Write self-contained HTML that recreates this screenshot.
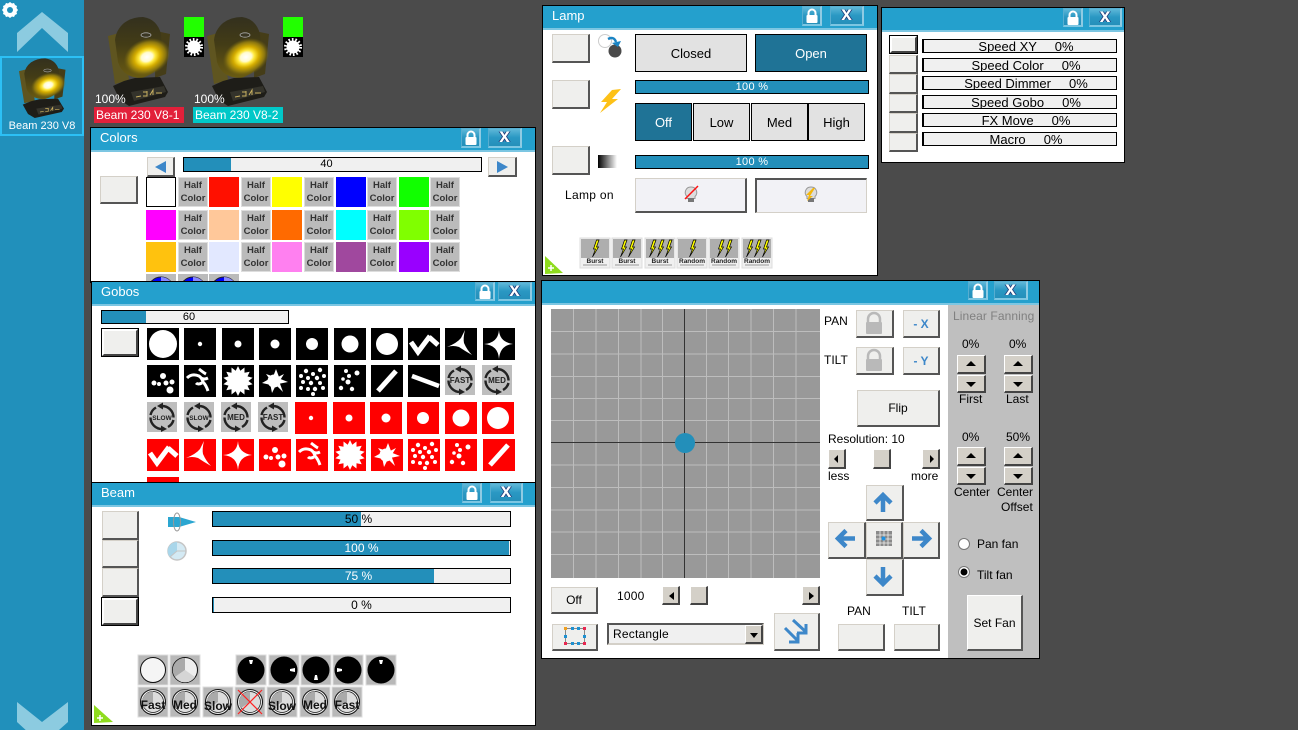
<!DOCTYPE html>
<html><head><meta charset="utf-8"><title>Fixture</title>
<style>
html,body{margin:0;padding:0;width:1298px;height:730px;overflow:hidden;background:#4b4b4b;font-family:"Liberation Sans",sans-serif;font-size:12px;color:#000}
.a,.w,.b,.t,.bar,.sp,.sb,.hc,.sw,.tb{position:absolute;box-sizing:border-box}
.w{background:#fff;border:1px solid #000;overflow:hidden}
.in{position:absolute;width:1298px;height:730px}
.tb{background:#24a0cd;border-bottom:2px solid #7cc6e2}
.t{white-space:nowrap;line-height:14px}
.ttl{color:#fff;font-size:13px;line-height:16px}
.b{background:#efefed;border:1px solid;border-color:#d4d0c8 #555 #555 #d4d0c8;border-width:1px 2px 2px 1px;text-align:center;display:flex;align-items:center;justify-content:center}
.sel{outline:1px solid #000;border-color:#fff #444 #444 #fff;border-width:2px}
.bar{background:#f0f0f0;border:1px solid #000;text-align:center;color:#000;font-size:12px;overflow:hidden}
.bar i{position:absolute;left:0;top:0;bottom:0;background:#238fba}
.bar span{position:relative;display:block;white-space:nowrap}
.sp{background:#d4d0c8;border:1px solid;border-color:#fff #444 #444 #fff;border-width:1px 2px 2px 1px}
.hc{background:#bbb;border:1px solid #ddd;font-weight:bold;font-size:9.5px;line-height:12.5px;color:#333;text-align:center;padding-top:2px;width:30px;height:30px}
.sw{width:30px;height:30px}
.st{background:#e2e2e2;border:1px solid #000;display:flex;align-items:center;justify-content:center;font-size:13px;position:absolute;box-sizing:border-box}
.on{background:#1f7396;color:#fff}
.lk,.xb{position:absolute;box-sizing:border-box;background:linear-gradient(#5fb8d8,#2a98c3 50%,#2590ba);border:1px solid #57add0;border-right:2px solid #8fcbe3;border-bottom:2px solid #7cc6e2}
.xb{color:#fff;font-weight:bold;font-size:19px;text-align:center;line-height:15px;text-shadow:1px 0 0 #223a7a,-1px 0 0 #223a7a}
svg{position:absolute;left:0;top:0;overflow:visible}
.s13 span{padding-left:12px;box-sizing:border-box}
</style></head><body>

<svg width="1298" height="730" viewBox="0 0 1298 730" style="z-index:0">
<defs>
<radialGradient id="glow" cx=".5" cy=".5" r=".5"><stop offset="0" stop-color="#ffffff"/><stop offset=".24" stop-color="#fffbd0"/><stop offset=".36" stop-color="#ffe83c"/><stop offset=".55" stop-color="#d4ac00"/><stop offset=".8" stop-color="#8a7510"/><stop offset="1" stop-color="#6a5c10" stop-opacity="0"/></radialGradient>
<linearGradient id="hd" x1="0" y1="0" x2="0" y2="1"><stop offset="0" stop-color="#33301e"/><stop offset=".45" stop-color="#433c16"/><stop offset="1" stop-color="#6a5b12"/></linearGradient>
<g id="light">
<polygon points="108,36 123,32 129,80 115,84" fill="#5f5520"/>
<polygon points="156,31 170,34 166,74 155,78" fill="#453d18"/>
<path d="M124 23Q132 17 143 17Q157 19 161 34L163 58Q160 72 142 78Q123 78 118 62L115 40Q116 30 124 23Z" fill="url(#hd)"/>
<ellipse cx="147" cy="57" rx="24" ry="18" fill="url(#glow)" transform="rotate(-22 147 57)"/>
<ellipse cx="146" cy="35" rx="5" ry="2.200" fill="#3a3622" stroke="#aaa" stroke-width=".8"/>
<polygon points="113,86 124,81 135,78 160,77 168,92 165,97 129,106 120,100" fill="#1e1d18"/>
<polygon points="131,92 164,86 166,92 134,101" fill="#34332b"/>
<path d="M136 97l5-1M143 96h4v-5M143 92h4M150 95l3-5v5M156 93h6" stroke="#c9b060" stroke-width="1" fill="none"/>
</g>
<g id="sun"><circle cx="10" cy="10" r="6.500" fill="#fff"/><circle cx="10" cy="10" r="7.500" fill="none" stroke="#fff" stroke-width="3" stroke-dasharray="1.600 1.800"/></g>
</defs>
<rect x="0" y="0" width="84" height="730" fill="#2190bb"/>
<g fill="#fff">
<path d="M10 2l2 1.500 2-.5 1 2 2 1-.5 2 1.500 2-1.500 2 .5 2-2 1-1 2-2-.5-2 1.500-2-1.500-2 .5-1-2-2-1 .5-2-1.500-2 1.500-2-.5-2 2-1 1-2 2 .5z" />
<circle cx="10" cy="10" r="3" fill="#2190bb"/>
</g>
<polygon points="17,33 42,12 68,33 68,52 42,28 17,52" fill="#8ccbe0"/>
<polygon points="17,702 42,722 68,702 68,722 42,745 17,722" fill="#8ccbe0"/>
<rect x="1" y="57" width="82" height="78" fill="#2190bb" stroke="#2cc0f5" stroke-width="2"/>
<use href="#light" transform="translate(-62,47) scale(.75,.67)"/>
<use href="#light" x="0" y="0"/>
<use href="#light" x="99" y="0"/>
<rect x="184" y="17" width="20" height="20" fill="#2f0"/><rect x="184" y="37" width="20" height="20" fill="#000"/><use href="#sun" x="184" y="37"/>
<rect x="283" y="17" width="20" height="20" fill="#2f0"/><rect x="283" y="37" width="20" height="20" fill="#000"/><use href="#sun" x="283" y="37"/>
<rect x="94" y="107" width="90" height="16" fill="#e2203a"/>
<rect x="193" y="107" width="90" height="16" fill="#00c8c8"/>
</svg>
<div class="t" style="left:0;width:84px;top:119px;text-align:center;color:#fff;font-size:11px">Beam 230 V8</div>
<div class="t" style="left:95px;top:92px;color:#fff">100%</div>
<div class="t" style="left:194px;top:92px;color:#fff">100%</div>
<div class="t" style="left:96px;top:108px;color:#fff">Beam 230 V8-1</div>
<div class="t" style="left:195px;top:108px;color:#fff">Beam 230 V8-2</div>

<!-- COLORS -->
<div class="w" style="left:90px;top:127px;width:446px;height:156px;z-index:1"><div class="in" style="left:-91px;top:-128px">
<div class="tb" style="left:91px;top:128px;width:444px;height:24px"></div>
<div class="t ttl" style="left:100px;top:130px">Colors</div>
<div class="lk" style="left:461px;top:128px;width:20px;height:20px"><svg width="18" height="18"><path d="M5.500 9V6a3.500 3.500 0 0 1 7 0v3" fill="none" stroke="#fff" stroke-width="2"/><rect x="3.500" y="8" width="11" height="8" rx="1" fill="#fff"/></svg></div>
<div class="xb" style="left:488px;top:128px;width:34px;height:20px">x</div>
<div class="b" style="left:147px;top:157px;width:28px;height:20px"><svg width="26" height="18" style="position:static"><polygon points="7,9 18,3 18,15" fill="#3d87c9"/></svg></div>
<div class="bar" style="left:183px;top:157px;width:299px;height:15px;line-height:13px;font-size:11px"><i style="width:47px"></i><span style="padding-right:12px">40</span></div>
<div class="b" style="left:488px;top:157px;width:29px;height:20px"><svg width="26" height="18" style="position:static"><polygon points="19,9 8,3 8,15" fill="#3d87c9"/></svg></div>
<div class="b" style="left:100px;top:176px;width:38px;height:28px"></div>
<div class="sw" style="left:146px;top:177px;background:#fff;border:1px solid #000"></div>
<div class="sw" style="left:209px;top:177px;background:#ff1000"></div>
<div class="sw" style="left:272px;top:177px;background:#ff0"></div>
<div class="sw" style="left:336px;top:177px;background:#00f"></div>
<div class="sw" style="left:399px;top:177px;background:#1f0"></div>
<div class="sw" style="left:146px;top:210px;background:#f0f"></div>
<div class="sw" style="left:209px;top:210px;background:#ffc89a"></div>
<div class="sw" style="left:272px;top:210px;background:#ff6a00"></div>
<div class="sw" style="left:336px;top:210px;background:#0ff"></div>
<div class="sw" style="left:399px;top:210px;background:#80ff00"></div>
<div class="sw" style="left:146px;top:242px;background:#ffc20e"></div>
<div class="sw" style="left:209px;top:242px;background:#e2e8ff"></div>
<div class="sw" style="left:272px;top:242px;background:#ff80f0"></div>
<div class="sw" style="left:336px;top:242px;background:#a0489e"></div>
<div class="sw" style="left:399px;top:242px;background:#90f"></div>
<div class="hc" style="left:178px;top:177px">Half<br>Color</div><div class="hc" style="left:241px;top:177px">Half<br>Color</div><div class="hc" style="left:304px;top:177px">Half<br>Color</div><div class="hc" style="left:367px;top:177px">Half<br>Color</div><div class="hc" style="left:430px;top:177px">Half<br>Color</div>
<div class="hc" style="left:178px;top:210px">Half<br>Color</div><div class="hc" style="left:241px;top:210px">Half<br>Color</div><div class="hc" style="left:304px;top:210px">Half<br>Color</div><div class="hc" style="left:367px;top:210px">Half<br>Color</div><div class="hc" style="left:430px;top:210px">Half<br>Color</div>
<div class="hc" style="left:178px;top:242px">Half<br>Color</div><div class="hc" style="left:241px;top:242px">Half<br>Color</div><div class="hc" style="left:304px;top:242px">Half<br>Color</div><div class="hc" style="left:367px;top:242px">Half<br>Color</div><div class="hc" style="left:430px;top:242px">Half<br>Color</div>
<svg width="1298" height="730"><g id="cw"><rect x="146" y="274" width="30" height="30" fill="#bbb"/><circle cx="161" cy="290" r="13" fill="#00f" stroke="#222"/><path d="M161 277a13 13 0 0 1 13 13h-13z" fill="#88f"/></g><use href="#cw" x="32"/><use href="#cw" x="63"/></svg>
</div></div>

<!-- GOBOS -->
<div class="w" style="left:91px;top:281px;width:445px;height:202px;z-index:2"><div class="in" style="left:-92px;top:-282px">
<div class="tb" style="left:92px;top:282px;width:443px;height:24px"></div>
<div class="t ttl" style="left:101px;top:284px">Gobos</div>
<div class="lk" style="left:475px;top:282px;width:20px;height:19px"><svg width="18" height="18"><path d="M5.500 9V6a3.500 3.500 0 0 1 7 0v3" fill="none" stroke="#fff" stroke-width="2"/><rect x="3.500" y="8" width="11" height="8" rx="1" fill="#fff"/></svg></div>
<div class="xb" style="left:498px;top:282px;width:34px;height:19px">x</div>
<div class="bar" style="left:101px;top:310px;width:188px;height:14px;line-height:12px;font-size:11px"><i style="width:44px"></i><span style="padding-right:12px">60</span></div>
<div class="b sel" style="left:102px;top:329px;width:36px;height:27px"></div>
<svg width="1298" height="730" font-family="Liberation Sans" font-weight="bold" text-anchor="middle">
<defs>
<g id="sq"><path d="M3 14L10 24L22 8M21 9L30 17" fill="none" stroke="#fff" stroke-width="5"/></g>
<path id="tri" d="M20 2Q18 10 19 15Q22 22 27 27Q20 23 14 19Q8 17 2 19Q12 15 16 10Z" fill="#fff"/>
<path id="st4" d="M16 2Q16.500 14 30 16Q17 17 16 31Q15 17 1 16Q15 15 16 2Z" fill="#fff"/>
<g id="d5" fill="#fff"><circle cx="16" cy="11" r="3"/><circle cx="7" cy="18" r="2.500"/><circle cx="12" cy="19" r="2"/><circle cx="19" cy="18" r="2.500"/><circle cx="25" cy="17" r="2.500"/><circle cx="23" cy="25" r="3.500"/></g>
<g id="sw"><path d="M3 13Q8 8 15 11Q18 13 19 17Q22 20 24 26M15 4Q20 8 22 9M24 13Q20 15 17 13M18 18Q14 20 12 18" fill="none" stroke="#fff" stroke-width="3"/></g>
<polygon id="bs" fill="#fff" points="16,1 18.300,5.800 22.500,2.500 22.500,7.800 27.700,6.700 25.500,11.400 30.600,12.700 26.500,16 30.600,19.300 25.500,20.600 27.700,25.300 22.500,24.200 22.500,29.500 18.300,26.200 16,31 13.700,26.200 9.500,29.500 9.500,24.200 4.300,25.300 6.500,20.600 1.400,19.300 5.500,16 1.400,12.700 6.500,11.400 4.300,6.700 9.500,7.800 9.500,2.500 13.700,5.800"/>
<g id="spl" fill="#fff"><circle cx="15" cy="16" r="6.500"/><polygon points="17,4 20,12 14,12"/><polygon points="29,17 19,13 19,19"/><polygon points="24,27 16,19 20,16"/><polygon points="13,28 11,18 17,20"/><polygon points="3,18 12,13 12,20"/><polygon points="7,9 16,12 12,16"/><polygon points="25,9 17,13 20,17"/></g>
<g id="many" fill="#fff"><circle cx="10" cy="6" r="2.200"/><circle cx="17" cy="9" r="2"/><circle cx="24" cy="5" r="2.200"/><circle cx="5" cy="11" r="2"/><circle cx="12" cy="13" r="2"/><circle cx="21" cy="13" r="2.200"/><circle cx="28" cy="11" r="2"/><circle cx="7" cy="17" r="2"/><circle cx="15" cy="18" r="2.200"/><circle cx="24" cy="18" r="2"/><circle cx="5" cy="23" r="2"/><circle cx="12" cy="24" r="2"/><circle cx="19" cy="24" r="2.200"/><circle cx="27" cy="23" r="2"/><circle cx="17" cy="29" r="2"/></g>
<g id="few" fill="#fff"><circle cx="12" cy="6" r="2"/><circle cx="15" cy="11" r="2"/><circle cx="23" cy="8" r="2.500"/><circle cx="9" cy="14" r="1.800"/><circle cx="14" cy="17" r="2.500"/><circle cx="7" cy="23" r="2.200"/><circle cx="18" cy="24" r="2.200"/></g>
<path id="dg" d="M7 26L25 6" stroke="#fff" stroke-width="5" fill="none"/>
<path id="sh" d="M4 11L31 21" stroke="#fff" stroke-width="4.500" fill="none"/>
<g id="rot"><rect width="30" height="30" fill="#bebebe"/><path d="M15 4A11.500 11.500 0 0 1 26.500 15.500M26.500 18A11.500 11.500 0 0 1 21 25M15 27A11.500 11.500 0 0 1 3.500 15.500M3.500 13A11.500 11.500 0 0 1 9 5.500" fill="none" stroke="#222" stroke-width="2.400"/><polygon points="10,4 16,0.500 16,7.500" fill="#222"/><polygon points="20,27 14,23.500 14,30" fill="#222"/></g>
</defs>
<g fill="#000">
<rect x="147" y="328" width="32" height="32"/><rect x="184" y="328" width="32" height="32"/><rect x="222" y="328" width="32" height="32"/><rect x="259" y="328" width="32" height="32"/><rect x="296" y="328" width="32" height="32"/><rect x="334" y="328" width="32" height="32"/><rect x="371" y="328" width="32" height="32"/><rect x="408" y="328" width="32" height="32"/><rect x="445" y="328" width="32" height="32"/><rect x="483" y="328" width="32" height="32"/>
<rect x="147" y="365" width="32" height="32"/><rect x="184" y="365" width="32" height="32"/><rect x="222" y="365" width="32" height="32"/><rect x="259" y="365" width="32" height="32"/><rect x="296" y="365" width="32" height="32"/><rect x="334" y="365" width="32" height="32"/><rect x="371" y="365" width="32" height="32"/><rect x="408" y="365" width="32" height="32"/>
</g>
<g fill="#fff"><circle cx="163" cy="344" r="14"/><circle cx="200" cy="344" r="2.200"/><circle cx="238" cy="344" r="3.500"/><circle cx="275" cy="344" r="4.500"/><circle cx="312" cy="344" r="6"/><circle cx="350" cy="344" r="8.500"/><circle cx="387" cy="344" r="11"/></g>
<use href="#sq" x="408" y="328"/><use href="#tri" x="445" y="328"/><use href="#st4" x="483" y="328"/>
<use href="#d5" x="147" y="365"/><use href="#sw" x="184" y="365"/><use href="#bs" x="222" y="365"/><use href="#spl" x="259" y="365"/><use href="#many" x="296" y="365"/><use href="#few" x="334" y="365"/><use href="#dg" x="371" y="365"/><use href="#sh" x="408" y="365"/>
<use href="#rot" x="445" y="365"/><text x="460" y="383" font-size="8" fill="#222">FAST</text>
<use href="#rot" x="482" y="365"/><text x="497" y="383" font-size="8" fill="#222">MED</text>
<use href="#rot" x="147" y="402"/><text x="162" y="420" font-size="6.500" fill="#222">SLOW</text>
<use href="#rot" x="184" y="402"/><text x="199" y="420" font-size="6.500" fill="#222">SLOW</text>
<use href="#rot" x="221" y="402"/><text x="236" y="420" font-size="8" fill="#222">MED</text>
<use href="#rot" x="258" y="402"/><text x="273" y="420" font-size="8" fill="#222">FAST</text>
<g fill="#f00">
<rect x="295" y="402" width="32" height="32"/><rect x="333" y="402" width="32" height="32"/><rect x="370" y="402" width="32" height="32"/><rect x="407" y="402" width="32" height="32"/><rect x="445" y="402" width="32" height="32"/><rect x="482" y="402" width="32" height="32"/>
<rect x="147" y="439" width="32" height="32"/><rect x="184" y="439" width="32" height="32"/><rect x="222" y="439" width="32" height="32"/><rect x="259" y="439" width="32" height="32"/><rect x="296" y="439" width="32" height="32"/><rect x="334" y="439" width="32" height="32"/><rect x="371" y="439" width="32" height="32"/><rect x="408" y="439" width="32" height="32"/><rect x="445" y="439" width="32" height="32"/><rect x="483" y="439" width="32" height="32"/>
<rect x="147" y="477" width="32" height="32"/>
</g>
<g fill="#fff"><circle cx="311" cy="418" r="2.200"/><circle cx="349" cy="418" r="3.500"/><circle cx="386" cy="418" r="4.500"/><circle cx="423" cy="418" r="6"/><circle cx="461" cy="418" r="8.500"/><circle cx="498" cy="418" r="11"/></g>
<use href="#sq" x="147" y="439"/><use href="#tri" x="184" y="439"/><use href="#st4" x="222" y="439"/><use href="#d5" x="259" y="439"/><use href="#sw" x="296" y="439"/><use href="#bs" x="334" y="439"/><use href="#spl" x="371" y="439"/><use href="#many" x="408" y="439"/><use href="#few" x="445" y="439"/><use href="#dg" x="483" y="439"/>
</svg>
</div></div>

<!-- BEAM -->
<div class="w" style="left:91px;top:482px;width:445px;height:244px;z-index:3"><div class="in" style="left:-92px;top:-483px">
<div class="tb" style="left:92px;top:483px;width:443px;height:24px"></div>
<div class="t ttl" style="left:101px;top:485px">Beam</div>
<div class="lk" style="left:462px;top:483px;width:20px;height:20px"><svg width="18" height="18"><path d="M5.500 9V6a3.500 3.500 0 0 1 7 0v3" fill="none" stroke="#fff" stroke-width="2"/><rect x="3.500" y="8" width="11" height="8" rx="1" fill="#fff"/></svg></div>
<div class="xb" style="left:490px;top:483px;width:33px;height:20px">x</div>
<div class="b" style="left:102px;top:511px;width:37px;height:29px"></div>
<div class="b" style="left:102px;top:540px;width:37px;height:28px"></div>
<div class="b" style="left:102px;top:568px;width:37px;height:29px"></div>
<div class="b sel" style="left:102px;top:598px;width:36px;height:27px"></div>
<div class="bar" style="left:212px;top:511px;width:299px;height:16px;line-height:14px"><i style="width:148px"></i><span style="padding-right:6px">50 %</span></div>
<div class="bar" style="left:212px;top:540px;width:299px;height:16px;line-height:14px;color:#fff"><i style="width:296px"></i><span>100 %</span></div>
<div class="bar" style="left:212px;top:568px;width:299px;height:16px;line-height:14px;color:#fff"><i style="width:221px"></i><span style="padding-right:6px">75 %</span></div>
<div class="bar" style="left:212px;top:597px;width:299px;height:16px;line-height:14px"><i style="width:1px"></i><span>0 %</span></div>
<svg width="1298" height="730" font-family="Liberation Sans" font-weight="bold" text-anchor="middle">
<polygon points="168,517 179,517 196,522 179,527 168,527" fill="#2ba6d1"/>
<ellipse cx="177" cy="522" rx="3.500" ry="9" fill="none" stroke="#999"/>
<circle cx="177" cy="551" r="9" fill="#d4eaf4" stroke="#c5c5c5" stroke-width="1.500"/><path d="M177 551V542A9 9 0 0 0 170 557Z" fill="#a9d6ea"/><path d="M177 551H186M177 551L170 557" stroke="#c5c5c5"/>
<g id="tl"><rect x="138" y="655" width="30" height="30" fill="#b8b8b8" stroke="#ddd"/></g>
<use href="#tl" x="32"/><use href="#tl" x="98"/><use href="#tl" x="131"/><use href="#tl" x="163"/><use href="#tl" x="195"/><use href="#tl" x="228"/>
<use href="#tl" y="32"/><use href="#tl" x="32" y="32"/><use href="#tl" x="65" y="32"/><use href="#tl" x="97" y="32"/><use href="#tl" x="129" y="32"/><use href="#tl" x="162" y="32"/><use href="#tl" x="194" y="32"/>
<circle cx="153" cy="670" r="12.500" fill="#f5f5f5" stroke="#111"/>
<circle cx="185" cy="670" r="12.500" fill="#eee" stroke="#111"/><path d="M185 670V658A12 12 0 0 0 175 677Z" fill="#aaa"/><path d="M185 670L175 677A12 12 0 0 0 195 677Z" fill="#d5d5d5"/>
<circle cx="251" cy="670" r="13.500"/><circle cx="284" cy="670" r="13.500"/><circle cx="316" cy="670" r="13.500"/><circle cx="348" cy="670" r="13.500"/><circle cx="381" cy="670" r="13.500"/>
<g fill="#fff"><polygon points="249,660 253,660 252,664 250,664"/><polygon points="295,668 295,672 290,671 290,669"/><polygon points="314,680 318,680 317,675 315,675"/><polygon points="337,668 337,672 342,671 342,669"/><polygon points="379,660 383,660 382,664 380,664"/></g>
<g id="r2"><circle cx="153" cy="702" r="12.500" fill="#eee" stroke="#111"/><circle cx="153" cy="702" r="10.500" fill="#ddd" stroke="#111" stroke-width=".7"/><path d="M153 702V691.500A10.500 10.500 0 0 0 144 708Z" fill="#aaa"/></g>
<use href="#r2" x="32"/><use href="#r2" x="65"/><use href="#r2" x="97"/><use href="#r2" x="129"/><use href="#r2" x="162"/><use href="#r2" x="194"/>
<g fill="#111"><text x="153" y="709" font-size="12">Fast</text><text x="185" y="709" font-size="12">Med</text><text x="218" y="710" font-size="12">Slow</text><text x="282" y="710" font-size="12">Slow</text><text x="315" y="709" font-size="12">Med</text><text x="347" y="709" font-size="12">Fast</text></g>
<path d="M238 690L262 714M262 690L238 714" stroke="#f22" stroke-width="1.200"/>
<polygon points="94,705 113,722 94,723" fill="#8fdc1e"/><path d="M97 718h6M100 715v6" stroke="#fff" stroke-width="1.500"/>
</svg>
</div></div>

<!-- LAMP -->
<div class="w" style="left:542px;top:5px;width:336px;height:271px;z-index:1"><div class="in" style="left:-543px;top:-6px">
<div class="tb" style="left:543px;top:6px;width:334px;height:24px"></div>
<div class="t ttl" style="left:552px;top:8px">Lamp</div>
<div class="lk" style="left:802px;top:6px;width:20px;height:20px"><svg width="18" height="18"><path d="M5.500 9V6a3.500 3.500 0 0 1 7 0v3" fill="none" stroke="#fff" stroke-width="2"/><rect x="3.500" y="8" width="11" height="8" rx="1" fill="#fff"/></svg></div>
<div class="xb" style="left:830px;top:6px;width:34px;height:20px">x</div>
<div class="b" style="left:552px;top:34px;width:38px;height:29px"></div>
<div class="b" style="left:552px;top:80px;width:38px;height:29px"></div>
<div class="b" style="left:552px;top:146px;width:38px;height:29px"></div>
<div class="st" style="left:635px;top:34px;width:112px;height:38px">Closed</div>
<div class="st on" style="left:755px;top:34px;width:112px;height:38px">Open</div>
<div class="bar" style="left:635px;top:80px;width:234px;height:14px;line-height:12px;color:#fff;font-size:11px;letter-spacing:.3px"><i style="width:232px"></i><span>100 %</span></div>
<div class="st on" style="left:635px;top:103px;width:57px;height:38px">Off</div>
<div class="st" style="left:693px;top:103px;width:57px;height:38px">Low</div>
<div class="st" style="left:751px;top:103px;width:57px;height:38px">Med</div>
<div class="st" style="left:808px;top:103px;width:57px;height:38px">High</div>
<div class="bar" style="left:635px;top:155px;width:234px;height:14px;line-height:12px;color:#fff;font-size:11px;letter-spacing:.3px"><i style="width:232px"></i><span>100 %</span></div>
<div class="t" style="left:565px;top:188px;letter-spacing:.3px">Lamp on</div>
<div class="b" style="left:635px;top:178px;width:112px;height:35px;background:#f2f2f6"></div>
<div class="b" style="left:755px;top:178px;width:112px;height:35px;background:#f2f2f6;border-color:#555 #d4d0c8 #d4d0c8 #555;border-width:2px 1px 1px 2px"></div>
<svg width="1298" height="730" font-family="Liberation Sans" font-weight="bold" text-anchor="middle">
<defs><linearGradient id="bw"><stop offset="0" stop-color="#000"/><stop offset="1" stop-color="#fff"/></linearGradient>
<g id="lb"><path d="M0 -7a5.500 5.500 0 0 1 4 9.500v2h-8v-2a5.500 5.500 0 0 1 4-9.500z" fill="#ddd" stroke="#999"/><rect x="-3" y="4" width="6" height="4" fill="#777"/></g>
<g id="et"><rect x="0" y="0" width="30" height="30" fill="#f0f0f0" stroke="#ddd"/><rect x="1" y="1" width="28" height="19" fill="#aeaeae"/><path d="M3 27H27" stroke="#999"/></g>
<path id="bt" d="M4.500 0L1.500 9H3.500L.5 17 6.500 7H4.500L7 0Z" fill="#ff0" stroke="#000" stroke-width=".7"/></defs>
<circle cx="605" cy="41" r="6.500" fill="#fff" stroke="#ccc"/><circle cx="615" cy="51" r="6.500" fill="#4a4a4a"/><path d="M608 39Q614 36 616 42" fill="none" stroke="#1a84c4" stroke-width="2.500"/><polygon points="612,43 621,41 618,47" fill="#1a84c4"/>
<polygon points="612,90 621,89 612,99 618,99 600,113 607,102 601,102" fill="#fdc117"/>
<rect x="598" y="155" width="19" height="13" fill="url(#bw)"/>
<use href="#lb" x="691" y="194"/><path d="M685 199L698 186" stroke="#f11" stroke-width="1.500"/>
<use href="#lb" x="811" y="194"/><polygon points="813,188 815,188 810,196 813,196 807,201 809,195 806,195" fill="#f5b80c"/>
<use href="#et" x="580" y="238"/><use href="#et" x="612" y="238"/><use href="#et" x="645" y="238"/><use href="#et" x="677" y="238"/><use href="#et" x="709" y="238"/><use href="#et" x="742" y="238"/>
<use href="#bt" x="592" y="240"/>
<use href="#bt" x="620" y="240"/><use href="#bt" x="628" y="240"/>
<use href="#bt" x="649" y="240"/><use href="#bt" x="657" y="240"/><use href="#bt" x="665" y="240"/>
<use href="#bt" x="689" y="240"/>
<use href="#bt" x="717" y="240"/><use href="#bt" x="725" y="240"/>
<use href="#bt" x="746" y="240"/><use href="#bt" x="754" y="240"/><use href="#bt" x="762" y="240"/>
<g font-size="6.500" fill="#222"><text x="595" y="263">Burst</text><text x="627" y="263">Burst</text><text x="660" y="263">Burst</text><text x="692" y="263">Random</text><text x="724" y="263">Random</text><text x="757" y="263">Random</text></g>
<polygon points="545,256 563,273 545,274" fill="#8fdc1e"/><path d="M548 268h6M551 265v6" stroke="#fff" stroke-width="1.500"/>
</svg>
</div></div>

<!-- SPEED -->
<div class="w" style="left:881px;top:7px;width:244px;height:156px;z-index:1"><div class="in" style="left:-882px;top:-8px">
<div class="tb" style="left:882px;top:8px;width:242px;height:24px"></div>
<div class="lk" style="left:1063px;top:8px;width:20px;height:19px"><svg width="18" height="18"><path d="M5.500 9V6a3.500 3.500 0 0 1 7 0v3" fill="none" stroke="#fff" stroke-width="2"/><rect x="3.500" y="8" width="11" height="8" rx="1" fill="#fff"/></svg></div>
<div class="xb" style="left:1089px;top:8px;width:33px;height:19px">x</div>
<div class="b sel" style="left:890px;top:36px;width:27px;height:17px"></div>
<div class="b" style="left:889px;top:55px;width:29px;height:19px"></div>
<div class="b" style="left:889px;top:74px;width:29px;height:20px"></div>
<div class="b" style="left:889px;top:94px;width:29px;height:19px"></div>
<div class="b" style="left:889px;top:113px;width:29px;height:20px"></div>
<div class="b" style="left:889px;top:133px;width:29px;height:19px"></div>
<div class="bar s13" style="left:922px;top:39px;width:195px;height:14px;line-height:13px;font-size:13px;border-left:2px solid #000"><span>Speed XY &nbsp;&nbsp;&nbsp; 0%</span></div>
<div class="bar s13" style="left:922px;top:58px;width:195px;height:14px;line-height:13px;font-size:13px;border-left:2px solid #000"><span>Speed Color &nbsp;&nbsp;&nbsp; 0%</span></div>
<div class="bar s13" style="left:922px;top:76px;width:195px;height:14px;line-height:13px;font-size:13px;border-left:2px solid #000"><span>Speed Dimmer &nbsp;&nbsp;&nbsp; 0%</span></div>
<div class="bar s13" style="left:922px;top:95px;width:195px;height:14px;line-height:13px;font-size:13px;border-left:2px solid #000"><span>Speed Gobo &nbsp;&nbsp;&nbsp; 0%</span></div>
<div class="bar s13" style="left:922px;top:113px;width:195px;height:14px;line-height:13px;font-size:13px;border-left:2px solid #000"><span>FX Move &nbsp;&nbsp;&nbsp; 0%</span></div>
<div class="bar s13" style="left:922px;top:132px;width:195px;height:14px;line-height:13px;font-size:13px;border-left:2px solid #000"><span>Macro &nbsp;&nbsp;&nbsp; 0%</span></div>
</div></div>

<!-- PAN/TILT -->
<div class="w" style="left:541px;top:280px;width:499px;height:379px;z-index:1"><div class="in" style="left:-542px;top:-281px">
<div class="tb" style="left:542px;top:281px;width:497px;height:24px"></div>
<div class="lk" style="left:968px;top:281px;width:20px;height:19px"><svg width="18" height="18"><path d="M5.500 9V6a3.500 3.500 0 0 1 7 0v3" fill="none" stroke="#fff" stroke-width="2"/><rect x="3.500" y="8" width="11" height="8" rx="1" fill="#fff"/></svg></div>
<div class="xb" style="left:994px;top:281px;width:34px;height:19px">x</div>
<div class="a" style="left:948px;top:305px;width:91px;height:353px;background:#bfbfbf"></div>
<div class="b" style="left:552px;top:624px;width:46px;height:27px"></div>
<svg width="1298" height="730">
<rect x="551" y="309" width="269" height="269" fill="#999"/>
<path d="M573.500 309V578M596 309V578M618.500 309V578M641 309V578M662.500 309V578M706.500 309V578M728.500 309V578M751 309V578M773.500 309V578M796 309V578M551 331.500H820M551 354H820M551 376.500H820M551 398.500H820M551 420.500H820M551 465H820M551 487.500H820M551 510H820M551 532H820M551 554.500H820" stroke="#bdbdbd"/>
<path d="M684.500 309V578M551 442.500H820" stroke="#333"/>
<circle cx="685" cy="443" r="10" fill="#238fba"/>
<rect x="565.500" y="628.500" width="19" height="15" fill="none" stroke="#888"/>
<g fill="#1e90d0"><rect x="571" y="627" width="3" height="3"/><rect x="577" y="627" width="3" height="3"/><rect x="564" y="635" width="3" height="3"/><rect x="583" y="635" width="3" height="3"/><rect x="571" y="642" width="3" height="3"/><rect x="577" y="642" width="3" height="3"/></g>
<g fill="#e8274f"><rect x="583" y="627" width="3" height="3"/><rect x="564" y="642" width="3" height="3"/><rect x="583" y="642" width="3" height="3"/></g><rect x="564" y="627" width="3" height="3" fill="#f0a020"/>
</svg>
<div class="b" style="left:551px;top:587px;width:47px;height:27px">Off</div>
<div class="t" style="left:617px;top:589px;letter-spacing:.2px">1000</div>
<div class="sp" style="left:662px;top:586px;width:18px;height:19px"></div>
<div class="sp" style="left:690px;top:586px;width:18px;height:19px"></div>
<div class="sp" style="left:802px;top:586px;width:18px;height:19px"></div>
<div class="a" style="left:607px;top:623px;width:157px;height:22px;background:#f0f0f0;border:2px solid;border-color:#555 #d4d0c8 #d4d0c8 #555;padding:2px 4px;letter-spacing:.2px">Rectangle</div>
<div class="sp" style="left:745px;top:625px;width:18px;height:19px"></div>
<div class="b" style="left:774px;top:613px;width:46px;height:38px"></div>
<div class="t" style="left:824px;top:314px">PAN</div>
<div class="t" style="left:824px;top:353px">TILT</div>
<div class="b" style="left:856px;top:310px;width:38px;height:28px"></div>
<div class="b" style="left:903px;top:310px;width:37px;height:28px;color:#3d87c9;font-weight:bold;font-size:12px">- X</div>
<div class="b" style="left:856px;top:347px;width:38px;height:28px"></div>
<div class="b" style="left:903px;top:347px;width:37px;height:28px;color:#3d87c9;font-weight:bold;font-size:12px">- Y</div>
<div class="b" style="left:857px;top:390px;width:83px;height:37px">Flip</div>
<div class="t" style="left:828px;top:432px">Resolution: 10</div>
<div class="sp" style="left:828px;top:449px;width:18px;height:20px"></div>
<div class="sp" style="left:873px;top:449px;width:18px;height:20px"></div>
<div class="sp" style="left:922px;top:449px;width:18px;height:20px"></div>
<div class="t" style="left:828px;top:469px">less</div>
<div class="t" style="left:911px;top:469px">more</div>
<div class="b" style="left:866px;top:485px;width:38px;height:36px"></div>
<div class="b" style="left:828px;top:522px;width:38px;height:37px"></div>
<div class="b" style="left:866px;top:522px;width:37px;height:37px"></div>
<div class="b" style="left:903px;top:522px;width:37px;height:37px"></div>
<div class="b" style="left:866px;top:559px;width:38px;height:37px"></div>
<div class="t" style="left:847px;top:604px">PAN</div>
<div class="t" style="left:902px;top:604px">TILT</div>
<div class="b" style="left:838px;top:624px;width:47px;height:27px"></div>
<div class="b" style="left:894px;top:624px;width:46px;height:27px"></div>
<div class="t" style="left:953px;top:309px;color:#808080;font-size:12px;letter-spacing:.1px">Linear Fanning</div>
<div class="t" style="left:962px;top:337px">0%</div>
<div class="t" style="left:1009px;top:337px">0%</div>
<div class="sp" style="left:957px;top:355px;width:29px;height:19px"></div>
<div class="sp" style="left:957px;top:375px;width:29px;height:18px"></div>
<div class="sp" style="left:1004px;top:355px;width:29px;height:19px"></div>
<div class="sp" style="left:1004px;top:375px;width:29px;height:18px"></div>
<div class="t" style="left:959px;top:392px">First</div>
<div class="t" style="left:1006px;top:392px">Last</div>
<div class="t" style="left:962px;top:430px">0%</div>
<div class="t" style="left:1006px;top:430px">50%</div>
<div class="sp" style="left:957px;top:447px;width:29px;height:19px"></div>
<div class="sp" style="left:957px;top:467px;width:29px;height:18px"></div>
<div class="sp" style="left:1004px;top:447px;width:29px;height:19px"></div>
<div class="sp" style="left:1004px;top:467px;width:29px;height:18px"></div>
<div class="t" style="left:954px;top:485px">Center</div>
<div class="t" style="left:997px;top:485px">Center</div>
<div class="t" style="left:1001px;top:500px">Offset</div>
<div class="t" style="left:977px;top:537px">Pan fan</div>
<div class="t" style="left:977px;top:568px">Tilt fan</div>
<div class="b" style="left:967px;top:595px;width:56px;height:56px;border-color:#fff #555 #555 #fff">Set Fan</div>
<svg width="1298" height="730">
<g fill="#b9b9b9"><path d="M868 323v-4a6 6 0 0 1 12 0v4" fill="none" stroke="#b9b9b9" stroke-width="2.500"/><rect x="866" y="322" width="16" height="12" rx="1"/><path d="M868 360v-4a6 6 0 0 1 12 0v4" fill="none" stroke="#b9b9b9" stroke-width="2.500"/><rect x="866" y="359" width="16" height="12" rx="1"/></g>
<g fill="#000">
<polygon points="966,366 976,366 971,361" /><polygon points="1013,366 1023,366 1018,361"/><polygon points="966,382 976,382 971,387"/><polygon points="1013,382 1023,382 1018,387"/>
<polygon points="966,458 976,458 971,453"/><polygon points="1013,458 1023,458 1018,453"/><polygon points="966,474 976,474 971,479"/><polygon points="1013,474 1023,474 1018,479"/>
<polygon points="838,455 838,463 834,459"/><polygon points="930,455 930,463 934,459"/><polygon points="674,592 674,600 669,596"/><polygon points="809,592 809,600 814,596"/><polygon points="750,633 758,633 754,638"/>
</g>
<g fill="none" stroke="#3d87c9" stroke-width="4.500">
<path d="M883 512V495M875 503L883 495 891 503"/>
<path d="M855 538.500H838M846 530.500L838 538.500 846 546.500"/>
<path d="M912 538.500H929M921 530.500L929 538.500 921 546.500"/>
<path d="M883 567V584M875 576L883 584 891 576"/>
<path d="M793 620L806 632M806 624V633H797" stroke-width="3"/>
<path d="M785 628L798 641M798 633V642H789" stroke-width="3"/>
</g>
<rect x="876" y="531" width="16" height="15" fill="#8a8a8a"/><path d="M880 531v15M884 531v15M888 531v15M876 535h16M876 539h16M876 543h16" stroke="#efefed" stroke-width=".8"/><circle cx="883.500" cy="538.500" r="2" fill="#1e90e0"/>
<circle cx="964" cy="544" r="5.500" fill="#fff" stroke="#777"/><circle cx="964" cy="572" r="5.500" fill="#fff" stroke="#777"/><circle cx="964" cy="572" r="3.500" fill="#000"/>
</svg>
</div></div>
</body></html>
